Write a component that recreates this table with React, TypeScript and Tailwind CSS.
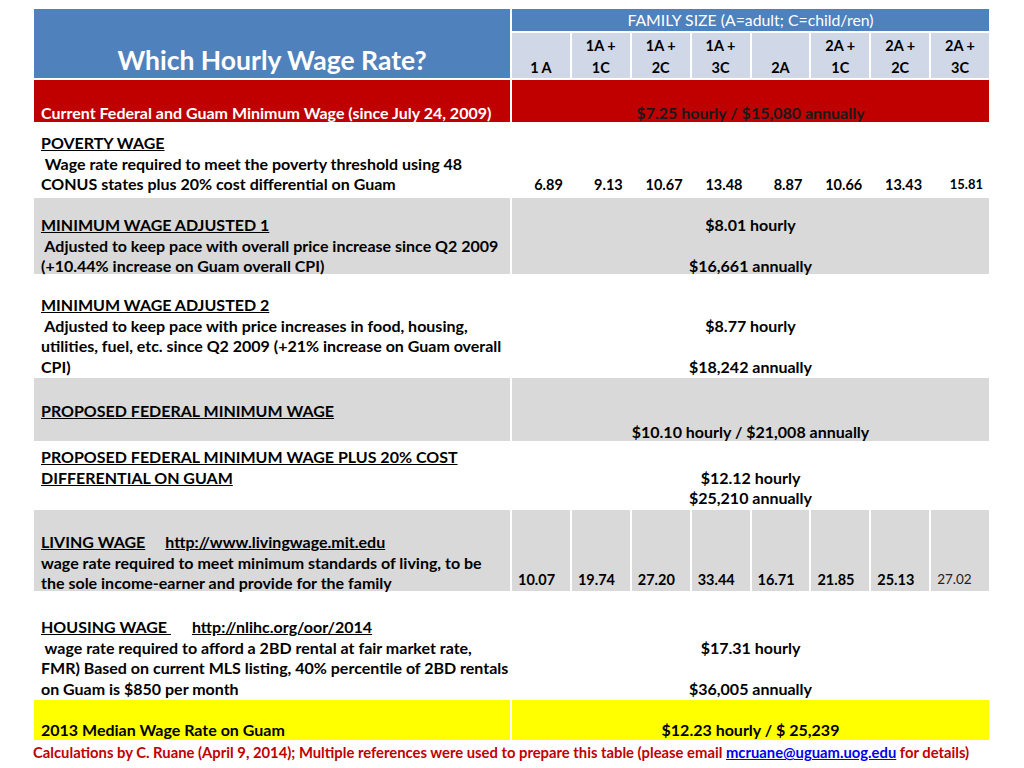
const sizes = [
  ['', '1 A'],
  ['1A +', '1C'],
  ['1A +', '2C'],
  ['1A +', '3C'],
  ['', '2A'],
  ['2A +', '1C'],
  ['2A +', '2C'],
  ['2A +', '3C'],
];

const poverty = ['6.89', '9.13', '10.67', '13.48', '8.87', '10.66', '13.43'];
const living = ['10.07', '19.74', '27.20', '33.44', '16.71', '21.85', '25.13'];

const gray = 'bg-[#d9d9d9]';

export default function App() {
  return (
    <div className="w-[1024px] h-[768px] bg-white font-['Lato',sans-serif] font-bold text-[16px] text-black overflow-hidden">
      <div className="ml-[34px] pt-[9px] w-[955px]">
        <div className="grid grid-cols-[476px_repeat(8,minmax(0,1fr))] grid-rows-[22px_45px_42px_72px_76px_100px_63px_65px_81px_105px_40px] gap-[2px] leading-[20.5px]">
          {/* Title + family size header */}
          <div className="row-span-2 bg-[#4f81bd] flex items-end justify-center pb-[2px]">
            <span className="text-white text-[26.5px] leading-[32px]">Which Hourly Wage Rate?</span>
          </div>
          <div className="col-span-8 bg-[#4f81bd] text-white font-normal text-[15.8px] flex items-center justify-center">
            FAMILY SIZE (A=adult; C=child/ren)
          </div>
          {sizes.map(([a, b], i) => (
            <div key={i} className="bg-[#d0d8e8] pt-[2px] text-center text-[14.5px] leading-[22px]">
              <div>{a || '\u00a0'}</div>
              <div>{b}</div>
            </div>
          ))}

          {/* Current minimum */}
          <div className="bg-[#c00000] text-white flex items-end px-[7px] leading-[18px]">
            Current Federal and Guam Minimum Wage (since July 24, 2009)
          </div>
          <div className="col-span-8 bg-[#c00000] text-[#1a1a1a] flex items-end justify-center leading-[18px]">
            $7.25 hourly / $15,080 annually
          </div>

          {/* Poverty wage */}
          <div className="px-[7px] pt-[9px] whitespace-nowrap">
            <div className="underline">POVERTY WAGE</div>
            <div>&nbsp;Wage rate required to meet the poverty threshold using 48</div>
            <div>CONUS states plus 20% cost differential on Guam</div>
          </div>
          {poverty.map((v) => (
            <div key={v} className="flex items-end justify-end pr-[7px] pb-[1px] text-[14.5px]">{v}</div>
          ))}
          <div className="flex items-end justify-end pr-[6px] pb-[4px] text-[13px] leading-[16px]">15.81</div>

          {/* Adjusted 1 */}
          <div className={`${gray} px-[7px] pt-[17px] whitespace-nowrap`}>
            <div className="underline">MINIMUM WAGE ADJUSTED 1</div>
            <div>&nbsp;Adjusted to keep pace with overall price increase since Q2 2009</div>
            <div>(+10.44% increase on Guam overall CPI)</div>
          </div>
          <div className={`col-span-8 ${gray} pt-[17px] text-center`}>
            <div>$8.01 hourly</div>
            <div>&nbsp;</div>
            <div>$16,661 annually</div>
          </div>

          {/* Adjusted 2 */}
          <div className="px-[7px] pt-[19px] whitespace-nowrap">
            <div className="underline">MINIMUM WAGE ADJUSTED 2</div>
            <div>&nbsp;Adjusted to keep pace with price increases in food, housing,</div>
            <div>utilities, fuel, etc. since Q2 2009 (+21% increase on Guam overall</div>
            <div>CPI)</div>
          </div>
          <div className="col-span-8 pt-[19px] text-center">
            <div>&nbsp;</div>
            <div>$8.77 hourly</div>
            <div>&nbsp;</div>
            <div>$18,242 annually</div>
          </div>

          {/* Proposed federal */}
          <div className={`${gray} px-[7px] pt-[23px] whitespace-nowrap`}>
            <div className="underline">PROPOSED FEDERAL MINIMUM WAGE</div>
          </div>
          <div className={`col-span-8 ${gray} pt-[23px] text-center`}>
            <div>&nbsp;</div>
            <div>$10.10 hourly / $21,008 annually</div>
          </div>

          {/* Proposed + 20% */}
          <div className="px-[7px] pt-[4px] whitespace-nowrap">
            <div className="underline">PROPOSED FEDERAL MINIMUM WAGE PLUS 20% COST</div>
            <div className="underline">DIFFERENTIAL ON GUAM</div>
          </div>
          <div className="col-span-8 pt-[4px] text-center">
            <div>&nbsp;</div>
            <div>$12.12 hourly</div>
            <div>$25,210 annually</div>
          </div>

          {/* Living wage */}
          <div className={`${gray} px-[7px] pt-[22px] whitespace-nowrap`}>
            <div>
              <span className="underline">LIVING WAGE</span>
              <span className="ml-[20px] underline">http://www.livingwage.mit.edu</span>
            </div>
            <div>wage rate required to meet minimum standards of living, to be</div>
            <div>the sole income-earner and provide for the family</div>
          </div>
          {living.map((v) => (
            <div key={v} className={`${gray} flex items-end pl-[6px] pb-[1px] text-[14.5px]`}>{v}</div>
          ))}
          <div className={`${gray} flex items-end pl-[6px] pb-[3px] font-normal text-[13.5px] leading-[18px] text-[#222]`}>27.02</div>

          {/* Housing wage */}
          <div className="px-[7px] pt-[24px] whitespace-nowrap">
            <div>
              <span className="underline">HOUSING WAGE&nbsp;</span>
              <span className="ml-[21px] underline">http://nlihc.org/oor/2014</span>
            </div>
            <div>&nbsp;wage rate required to afford a 2BD rental at fair market rate,</div>
            <div>FMR) Based on current MLS listing, 40% percentile of 2BD rentals</div>
            <div>on Guam is $850 per month</div>
          </div>
          <div className="col-span-8 pt-[24px] text-center">
            <div>&nbsp;</div>
            <div>$17.31 hourly</div>
            <div>&nbsp;</div>
            <div>$36,005 annually</div>
          </div>

          {/* Median */}
          <div className="bg-[#ffff00] px-[7px] pt-[20px] whitespace-nowrap">2013 Median Wage Rate on Guam</div>
          <div className="col-span-8 bg-[#ffff00] pt-[20px] text-center">$12.23 hourly / $ 25,239</div>
        </div>
      </div>

      <p className="mt-[2px] pl-[33px] text-[#c00000] text-[14.8px] leading-[20px] whitespace-nowrap">
        Calculations by C. Ruane (April 9, 2014); Multiple references were used to prepare this table (please email{' '}
        <span className="text-[#0000ee] underline">mcruane@uguam.uog.edu</span> for details)
      </p>
    </div>
  );
}
